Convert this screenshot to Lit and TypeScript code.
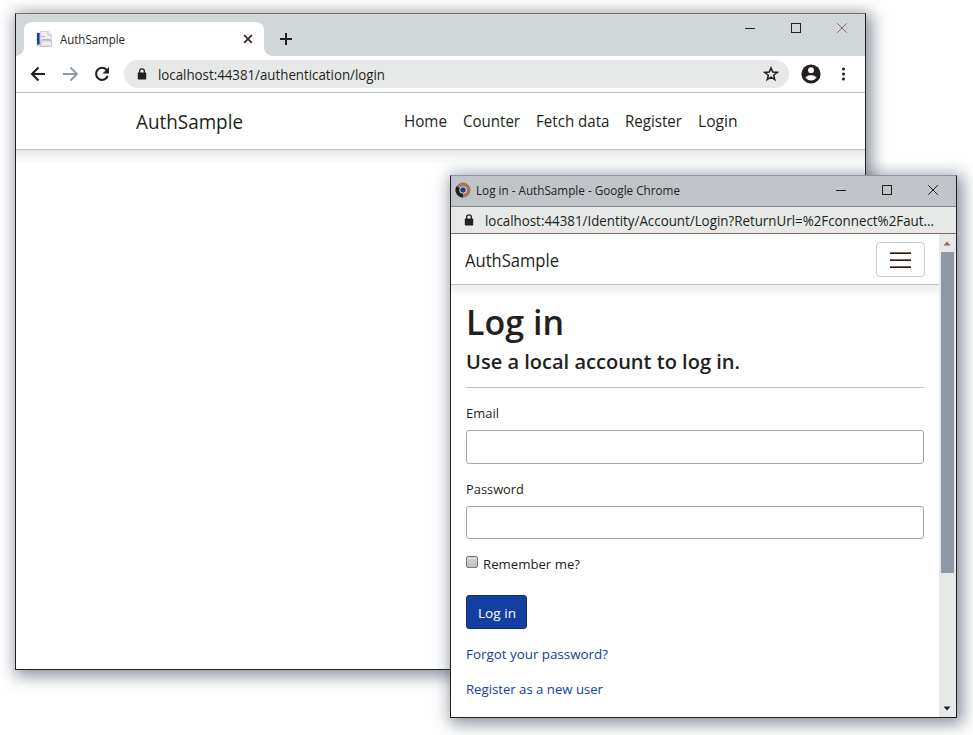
import { LitElement, html, css, svg } from "lit";
import { customElement, property } from "lit/decorators.js";

/** A single line of text that is set to a fixed measure. */
@customElement("fit-text")
class FitText extends LitElement {
  static styles = css`
    :host { display: block; flex: none; white-space: nowrap; }
    .line { display: inline-block; transform-origin: 0 50%; }
  `;
  @property({ type: Number }) w = 0;
  @property() text = "";

  render() {
    return html`<span class="line">${this.text}</span>`;
  }

  firstUpdated() {
    const line = this.renderRoot.querySelector(".line") as HTMLElement;
    const natural = line.getBoundingClientRect().width;
    if (!natural || !this.w) return;
    line.style.transform = `scaleX(${this.w / natural})`;
    this.style.width = `${this.w}px`;
  }
}

const controls = svg`
  <path d="M0 10.500H10" />
  <rect x="46.500" y="5.500" width="9" height="9" />
  <path class="x" d="M92.200 5.200L101.800 14.800M101.800 5.200L92.200 14.800" />`;

const lock = html`<svg class="lock" width="10" height="12" viewBox="0 0 10 12">
  <path d="M2.600 5V3.200a2.400 2.400 0 0 1 4.800 0V5" fill="none" stroke="#231f20" stroke-width="1.300" />
  <rect x="0.800" y="4.500" width="8.400" height="7" rx="0.800" fill="#231f20" />
</svg>`;

@customElement("main-window")
class MainWindow extends LitElement {
  static styles = css`
    :host { display: flex; flex-direction: column; box-sizing: border-box; background: #fff;
      border: 1px solid #231f20; border-top-color: #8b6b5c; }
    .tabs { height: 42px; background: #d1d6d9; display: flex; align-items: flex-end; }
    .tab { position: relative; margin-left: 8px; width: 240px; height: 34px; box-sizing: border-box;
      background: #fff; border-radius: 8px 8px 0 0; display: flex; align-items: center; padding: 0 11px 0 12px; }
    .tab::before, .tab::after { content: ""; position: absolute; bottom: 0; width: 8px; height: 8px; }
    .tab::before { left: -8px; background: radial-gradient(circle at 0 0, transparent 7.500px, #fff 8px); }
    .tab::after { right: -8px; background: radial-gradient(circle at 100% 0, transparent 7.500px, #fff 8px); }
    .tab fit-text { font-size: 12.500px; margin: 0 auto 0 8px; }
    .plus { margin: 0 0 10px 15px; }
    .controls { margin: 0 17px 18px auto; fill: none; stroke: #231f20; stroke-width: 1; }
    .controls .x { stroke: #8b6b5c; }
    .toolbar { height: 36px; display: flex; align-items: center; border-bottom: 1px solid #bfc3ca; }
    .nav-icons { width: 108px; flex: none; }
    .pill { width: 665px; height: 28px; box-sizing: border-box; border-radius: 14px; background: #e6e9e8;
      display: flex; align-items: center; padding: 0 10px 0 13px; }
    .pill fit-text { font-size: 14px; margin: 0 0 0 11px; }
    .star { margin-left: auto; }
    .account { margin-left: 12px; }
    .dots { margin-left: 20px; }
    .nav { height: 56px; display: flex; align-items: center; border-bottom: 1px solid #bfc3c6;
      padding: 0 127.500px 0 120px; }
    .brand { font-size: 20px; margin-right: auto; }
    .links { display: flex; gap: 16px; font-size: 15.500px; }
    .shade { height: 14px; background: linear-gradient(#e6e8e9, #fff); }
  `;

  private links: [string, number][] = [
    ["Home", 43], ["Counter", 57], ["Fetch data", 73.5], ["Register", 57], ["Login", 39.5],
  ];

  render() {
    return html`
      <div class="tabs">
        <div class="tab">
          <svg width="16" height="16" viewBox="0 0 16 16">
            <path d="M4.500 0.500H12.500L15.500 3.500V8.500H4.500Z" fill="#eceeef" stroke="#d1d6d9" />
            <path d="M0.500 1.500H4V15.500H0.500Z" fill="#d1d6d9" />
            <path d="M12 0.500V4H15.500" fill="#fff" stroke="#c0c4c9" />
            <rect x="1" y="2" width="2.600" height="11.500" fill="#1340a0" />
            <path d="M5 5.500H9M7 8.500H14" stroke="#b3b9be" />
            <path d="M4.500 9.500H15.500V15.500H4.500Z" fill="#dfe3e4" stroke="#c0c4c9" />
            <path d="M7 12.500H15" stroke="#fff" />
          </svg>
          <fit-text w="65" text="AuthSample"></fit-text>
          <svg width="10" height="10" viewBox="0 0 10 10">
            <path d="M1.200 1.200L8.800 8.800M8.800 1.200L1.200 8.800" stroke="#3b2a24" stroke-width="1.800" />
          </svg>
        </div>
        <svg class="plus" width="14" height="14" viewBox="0 0 14 14">
          <path d="M7 1V13M1 7H13" stroke="#231f20" stroke-width="2" />
        </svg>
        <svg class="controls" width="103" height="20" viewBox="0 0 103 20">${controls}</svg>
      </div>
      <div class="toolbar">
        <svg class="nav-icons" width="108" height="36" viewBox="0 0 108 36">
          <path d="M29 18H16.500M22.500 11.500L16 18L22.500 24.500" fill="none" stroke="#231f20" stroke-width="2.100" />
          <path d="M47 18H60M54.500 11.500L61 18L54.500 24.500" fill="none" stroke="#9299a3" stroke-width="1.900" />
          <path d="M90.500 13.800A6 6 0 1 0 91.700 19.800" fill="none" stroke="#231f20" stroke-width="2.100" />
          <path d="M93 11V17.500H86.500Z" fill="#231f20" />
        </svg>
        <div class="pill">
          ${lock}
          <fit-text w="227" text="localhost:44381/authentication/login"></fit-text>
          <svg class="star" width="16" height="16" viewBox="0 0 16 16">
            <path d="M8 1.900L9.700 6.100L14.200 6.400L10.700 9.200L11.800 13.600L8 11.200L4.200 13.600L5.300 9.200L1.800 6.400L6.300 6.100Z"
              fill="none" stroke="#231f20" stroke-width="1.500" />
          </svg>
        </div>
        <svg class="account" width="20" height="20" viewBox="0 0 20 20">
          <circle cx="10" cy="10" r="9.600" fill="#231f20" />
          <circle cx="10" cy="6.200" r="2.900" fill="#fff" />
          <path d="M4.300 13.600Q6.500 10.900 10 10.900T15.700 13.600Q13.500 16.600 10 16.600T4.300 13.600Z" fill="#fff" />
        </svg>
        <svg class="dots" width="4" height="14" viewBox="0 0 4 14" fill="#231f20">
          <circle cx="2.500" cy="2" r="1.500" /><circle cx="2.500" cy="7" r="1.500" /><circle cx="2.500" cy="12" r="1.500" />
        </svg>
      </div>
      <div class="nav">
        <fit-text class="brand" w="107" text="AuthSample"></fit-text>
        <div class="links">
          ${this.links.map(([t, w]) => html`<fit-text w=${w} text=${t}></fit-text>`)}
        </div>
      </div>
      <div class="shade"></div>`;
  }
}

@customElement("login-window")
class LoginWindow extends LitElement {
  static styles = css`
    :host { display: flex; flex-direction: column; box-sizing: border-box; background: #fff;
      border: 1px solid #231f20; border-top-color: #8f97a3; }
    .title { height: 30px; background: #c0c4c9; border-bottom: 1px solid #858a92; display: flex; align-items: center; }
    .logo { margin: 0 0 2px 4px; }
    .title fit-text { font-size: 12.500px; margin: 0 0 1px 5px; }
    .controls { margin: 0 17px 2px auto; fill: none; stroke: #231f20; stroke-width: 1; }
    .address { height: 26px; background: #e6e9e8; border-bottom: 1px solid #8b6b5c; display: flex; align-items: center; }
    .lock { margin-left: 13px; }
    .address .lock { margin-bottom: 1px; }
    .address fit-text { font-size: 14px; margin: 0 0 0 11px; }
    .body { flex: 1; display: flex; }
    .page { flex: 1; }
    .nav { height: 51px; box-sizing: border-box; border-bottom: 1px solid #bfc3c6; display: flex;
      align-items: center; padding: 0 14px; }
    .brand { margin-right: auto; font-size: 17.800px; margin-top: 1px; }
    .toggler { width: 49px; height: 35px; box-sizing: border-box; border: 1px solid #c4cacd; border-radius: 4px;
      display: flex; align-items: center; justify-content: center; margin-top: 1px; background: #fff; padding: 0; }
    .shade { height: 12px; background: linear-gradient(#eaeced, #fff); }
    .form { padding: 0 15px; font-size: 13.500px; line-height: 20px; }
    .h1 { font-size: 34.500px; font-weight: 600; line-height: 42px; margin-top: 4px; }
    .h2 { font-size: 20.500px; font-weight: 600; line-height: 24px; margin-top: 6px; }
    .rule { height: 1px; background: #c0c4c8; margin: 14px 0 15px; }
    .field { width: 458px; height: 34px; box-sizing: border-box; border: 1px solid #a3a8b0; border-radius: 3px;
      margin: 7px 0 15px; background: #fff; display: block; padding: 0; }
    .field.second { height: 33px; margin-bottom: 15px; }
    .check { display: flex; align-items: center; gap: 5px; }
    .box { width: 12px; height: 12px; box-sizing: border-box; border: 1px solid #8b7468; border-radius: 2px;
      background: linear-gradient(#d5d9dc, #b9bec4); margin-top: -4px; }
    .submit { width: 61px; height: 34px; box-sizing: border-box; border: 1px solid #1b2f6b; border-radius: 3px;
      background: #1340a0; color: #fff; padding: 7px 11px 0; margin: 21px 0 15px; }
    .link { color: #1340a0; margin-bottom: 15px; }
    .scroll { width: 17px; background: #e6e9e8; display: flex; flex-direction: column; align-items: center;
      box-sizing: border-box; padding: 7px 2px 6px 1px; }
    .thumb { width: 13px; height: 321px; margin-top: 6px; background: #9097a4; }
    .down { margin-top: auto; }
  `;

  render() {
    return html`
      <div class="title">
        <svg class="logo" width="16" height="16" viewBox="0 0 16 16">
          <circle cx="8" cy="8" r="7.500" fill="#a5765a" />
          <path d="M1.500 4.300L8 8L8 15.500A7.500 7.500 0 0 1 1.500 4.300Z" fill="#231f20" />
          <circle cx="8" cy="8" r="3.600" fill="#fff" />
          <circle cx="8" cy="8" r="2.800" fill="#1340a0" />
        </svg>
        <fit-text w="204" text="Log in - AuthSample - Google Chrome"></fit-text>
        <svg class="controls" width="103" height="20" viewBox="0 0 103 20">${controls}</svg>
      </div>
      <div class="address">
        ${lock}
        <fit-text w="449" text="localhost:44381/Identity/Account/Login?ReturnUrl=%2Fconnect%2Faut..."></fit-text>
      </div>
      <div class="body">
        <div class="page">
          <div class="nav">
            <fit-text class="brand" w="94" text="AuthSample"></fit-text>
            <button class="toggler" aria-label="Menu">
              <svg width="21" height="18" viewBox="0 0 21 18">
                <path d="M0 2H21M0 9H21M0 16H21" stroke="#8b5f48" stroke-width="2" />
                <path d="M0 2.500H21M0 9.500H21M0 16.500H21" stroke="#231f20" stroke-width="1" />
              </svg>
            </button>
          </div>
          <div class="shade"></div>
          <div class="form">
            <fit-text class="h1" w="98" text="Log in"></fit-text>
            <fit-text class="h2" w="274" text="Use a local account to log in."></fit-text>
            <div class="rule"></div>
            <fit-text w="33" text="Email"></fit-text>
            <input class="field" />
            <fit-text w="58" text="Password"></fit-text>
            <input class="field second" />
            <div class="check"><div class="box"></div><fit-text w="97" text="Remember me?"></fit-text></div>
            <div class="submit"><fit-text w="38" text="Log in"></fit-text></div>
            <fit-text class="link" w="142" text="Forgot your password?"></fit-text>
            <fit-text class="link" w="137" text="Register as a new user"></fit-text>
          </div>
        </div>
        <div class="scroll">
          <svg width="8" height="5" viewBox="0 0 8 5"><path d="M4 0.500L7.500 4.500H0.500Z" fill="#8b6b5c" /></svg>
          <div class="thumb"></div>
          <svg class="down" width="8" height="5" viewBox="0 0 8 5"><path d="M4 4.500L7.500 0.500H0.500Z" fill="#231f20" /></svg>
        </div>
      </div>`;
  }
}

@customElement("app-root")
class AppRoot extends LitElement {
  static styles = css`
    :host { display: block; position: relative; width: 973px; height: 735px; overflow: hidden; background: #fff;
      color: #231f20; font-family: "Open Sans", "Noto Sans", sans-serif; }
    .main, .login { position: absolute; box-shadow: 3px 3px 15px 3px rgba(70, 80, 98, 0.62); }
    .main { left: 15px; top: 13px; width: 851px; height: 657px; }
    .login { left: 450px; top: 175px; width: 507px; height: 543px; }
  `;

  render() {
    return html`<main-window class="main"></main-window><login-window class="login"></login-window>`;
  }
}
